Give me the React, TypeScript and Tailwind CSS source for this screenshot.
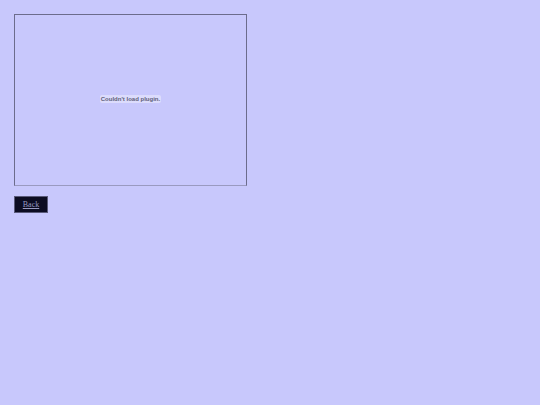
export default function App() {
  return (
    <div className="min-h-[405px] w-full bg-[#c8c8fc] p-[14px]">
      <div className="flex h-[172px] w-[233px] items-center justify-center border border-[#6c6c8c] border-b-[#9a9ac0] pb-[2px]">
        <span className="rounded-[2px] bg-[#dcdcfc] px-[1px] py-[1px] text-[6px] font-bold leading-none text-[#60607a] [font-family:'Liberation_Sans',Arial,sans-serif]">
          Couldn&apos;t load plugin.
        </span>
      </div>
      <button className="mt-[10px] flex h-[17px] w-[34px] items-center justify-center border border-[#5a5a7a] bg-[#0c0c22] text-[8px] text-[#9898c0] underline [font-family:'Liberation_Serif','Times_New_Roman',serif]">
        Back
      </button>
    </div>
  )
}
